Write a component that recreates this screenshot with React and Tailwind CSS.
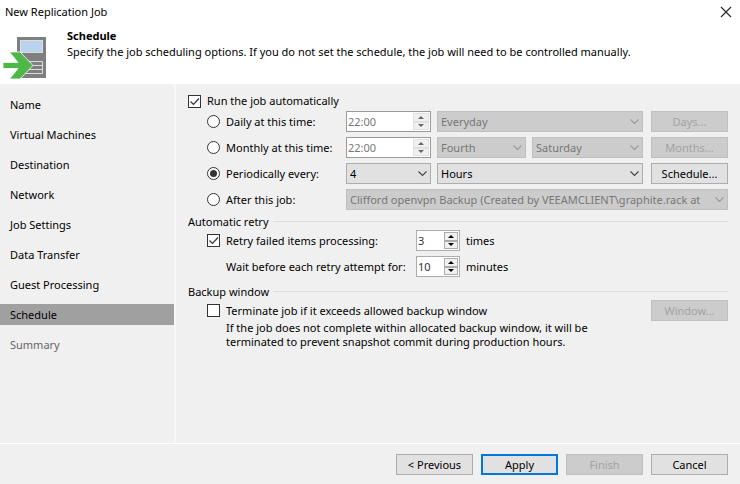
import React, { useState } from 'react';

const steps = [
  'Name',
  'Virtual Machines',
  'Destination',
  'Network',
  'Job Settings',
  'Data Transfer',
  'Guest Processing',
  'Schedule',
  'Summary',
];

function JobIcon() {
  return (
    <svg width="44" height="44" viewBox="0 0 44 44" aria-hidden="true">
      <rect x="14" y="1" width="29" height="41" fill="#7f7f7f" />
      <rect x="17.5" y="4.5" width="22" height="12" fill="#b9d3ee" stroke="#dcdcdc" />
      <path d="M22 25.5h17.5v12H22M22 29.5h17.5M22 33.5h17.5" fill="none" stroke="#dcdcdc" />
      <path d="M0 26.500h15L6.500 16h10.500l13 13.500L17 43H6.500L15 32.500H0z" fill="#4db848" stroke="#fff" strokeWidth="0.8" />
    </svg>
  );
}

function Checkbox({ label, defaultChecked }) {
  return (
    <label className="flex items-center gap-[6px]">
      <span className="relative flex h-[13px] w-[13px] shrink-0">
        <input
          type="checkbox"
          defaultChecked={defaultChecked}
          className="peer h-[13px] w-[13px] appearance-none border border-[#333] bg-white"
        />
        <svg className="pointer-events-none absolute inset-0 hidden peer-checked:block" width="13" height="13" viewBox="0 0 13 13">
          <path d="M2.500 6.500l3 3 5.500-6" fill="none" stroke="#333" strokeWidth="1.2" />
        </svg>
      </span>
      {label}
    </label>
  );
}

function Radio({ label, checked, onChange }) {
  return (
    <label className="flex w-[139px] shrink-0 items-center gap-[6px] whitespace-nowrap">
      <span className="relative flex h-[13px] w-[13px] shrink-0">
        <input
          type="radio"
          name="mode"
          checked={checked}
          onChange={onChange}
          className="peer h-[13px] w-[13px] appearance-none rounded-full border border-[#333] bg-white"
        />
        <span className="pointer-events-none absolute inset-[3px] hidden rounded-full bg-[#333] peer-checked:block" />
      </span>
      {label}
    </label>
  );
}

function Select({ label, options, disabled, className }) {
  return (
    <div className={`relative h-[21px] min-w-0 ${className}`}>
      <select
        aria-label={label}
        disabled={disabled}
        className="block h-full w-full appearance-none border border-[#adadad] bg-[#e1e1e1] pr-4 pl-[3px] disabled:border-[#bfbfbf] disabled:bg-[#ccc] disabled:text-[#777] disabled:opacity-100"
      >
        {options.map((o) => (
          <option key={o}>{o}</option>
        ))}
      </select>
      <svg className="pointer-events-none absolute top-[7px] right-1" width="9" height="7" viewBox="0 0 9 7">
        <path d="M.5 1.500l4 4 4-4" fill="none" stroke={disabled ? '#9a9a9a' : '#444'} strokeWidth="1.1" />
      </svg>
    </div>
  );
}

function Spinner({ label, value, disabled, className }) {
  const color = disabled ? '#666' : '#000';
  return (
    <div className={`flex h-[21px] shrink-0 border bg-white p-px ${disabled ? 'border-[#999]' : 'border-[#abadb3]'} ${className}`}>
      <input
        type="text"
        aria-label={label}
        defaultValue={value}
        disabled={disabled}
        className="min-w-0 flex-1 bg-white text-[#333] disabled:text-[#777]"
      />
      <div className={`flex flex-col ${disabled ? 'w-4' : 'w-[14px]'}`}>
        {['up', 'down'].map((dir) => (
          <button
            key={dir}
            type="button"
            disabled={disabled}
            aria-label={`${label} ${dir}`}
            className="flex flex-1 items-center justify-center border border-[#acacac] bg-[#f0f0f0] disabled:border-[#e0e0e0]"
          >
            <svg width="6" height="3" viewBox="0 0 6 3">
              <path d={dir === 'up' ? 'M0 3L3 0l3 3z' : 'M0 0l3 3 3-3z'} fill={color} />
            </svg>
          </button>
        ))}
      </div>
    </div>
  );
}

function Button({ children, disabled, primary }) {
  return (
    <button
      type="button"
      disabled={disabled}
      className={`h-[21px] w-[77px] shrink-0 bg-[#e1e1e1] disabled:border-[#bfbfbf] disabled:bg-[#ccc] disabled:text-[#a3a3a3] ${
        primary ? 'border-2 border-[#0078d7]' : 'border border-[#adadad]'
      }`}
    >
      {children}
    </button>
  );
}

function SectionTitle({ children }) {
  return (
    <h2 className="flex h-[17px] items-center gap-1">
      {children}
      <span className="h-px flex-1 bg-[#dcdcdc]" />
    </h2>
  );
}

function App() {
  const [mode, setMode] = useState('periodic');

  return (
    <div className="flex min-h-screen flex-col bg-[#f0f0f0] font-['Noto_Sans','Open_Sans',sans-serif] text-[11px] leading-[14px] text-black">
      <header className="h-[84px] bg-white">
        <div className="flex h-6 items-center justify-between pr-2 pl-[5px]">
          <span>New Replication Job</span>
          <button type="button" aria-label="Close">
            <svg width="12" height="12" viewBox="0 0 12 12">
              <path d="M1 1l10 10M11 1L1 11" stroke="#222" strokeWidth="1.1" />
            </svg>
          </button>
        </div>
        <div className="flex gap-5 pl-[3px]">
          <div className="pt-3">
            <JobIcon />
          </div>
          <div className="pt-1">
            <h1 className="leading-4 font-bold">Schedule</h1>
            <p className="leading-4">
              Specify the job scheduling options. If you do not set the schedule, the job will need to be controlled manually.
            </p>
          </div>
        </div>
      </header>

      <div className="flex flex-1">
        <nav className="w-[176px] shrink-0 border-r-2 border-[#f8f8f8] pt-[10px]">
          <ul className="flex flex-col gap-[9px]">
            {steps.map((step) => (
              <li key={step}>
                <a
                  href="#"
                  className={`flex h-[21px] items-center pl-[10px] ${step === 'Schedule' ? 'bg-[#a0a0a0]' : ''} ${
                    step === 'Summary' ? 'text-[#666]' : ''
                  }`}
                >
                  {step}
                </a>
              </li>
            ))}
          </ul>
        </nav>

        <main className="min-w-0 flex-1 pt-[7px] pr-3 pl-3">
          <div className="flex h-5 items-center">
            <Checkbox label="Run the job automatically" defaultChecked />
          </div>

          <div className="flex flex-col gap-[5px] pb-[3px] pl-[19px]">
            <div className="flex">
              <Radio label="Daily at this time:" checked={mode === 'daily'} onChange={() => setMode('daily')} />
              <Spinner label="Daily time" value="22:00" disabled={mode !== 'daily'} className="mr-[6px] w-[85px]" />
              <Select label="Daily days" options={['Everyday']} disabled={mode !== 'daily'} className="mr-2 flex-1" />
              <Button disabled={mode !== 'daily'}>Days...</Button>
            </div>
            <div className="flex">
              <Radio label="Monthly at this time:" checked={mode === 'monthly'} onChange={() => setMode('monthly')} />
              <Spinner label="Monthly time" value="22:00" disabled={mode !== 'monthly'} className="mr-[6px] w-[85px]" />
              <Select label="Week of month" options={['Fourth']} disabled={mode !== 'monthly'} className="mr-[6px] w-[89px]" />
              <Select label="Day of week" options={['Saturday']} disabled={mode !== 'monthly'} className="mr-2 flex-1" />
              <Button disabled={mode !== 'monthly'}>Months...</Button>
            </div>
            <div className="flex">
              <Radio label="Periodically every:" checked={mode === 'periodic'} onChange={() => setMode('periodic')} />
              <Select label="Period" options={['4']} disabled={mode !== 'periodic'} className="mr-[6px] w-[85px]" />
              <Select label="Period unit" options={['Hours']} disabled={mode !== 'periodic'} className="mr-2 flex-1" />
              <Button disabled={mode !== 'periodic'}>Schedule...</Button>
            </div>
            <div className="flex">
              <Radio label="After this job:" checked={mode === 'after'} onChange={() => setMode('after')} />
              <Select
                label="Preceding job"
                options={['Clifford openvpn Backup (Created by VEEAMCLIENT\\graphite.rack at']}
                disabled={mode !== 'after'}
                className="flex-1"
              />
            </div>
          </div>

          <SectionTitle>Automatic retry</SectionTitle>
          <div className="flex flex-col gap-[5px] pb-[6px] pl-[19px]">
            <div className="flex items-center">
              <div className="w-[209px]">
                <Checkbox label="Retry failed items processing:" defaultChecked />
              </div>
              <Spinner label="Retry count" value="3" className="mr-[6px] w-11" />
              times
            </div>
            <div className="flex items-center">
              <div className="w-[209px] pl-[19px] whitespace-nowrap">Wait before each retry attempt for:</div>
              <Spinner label="Retry wait" value="10" className="mr-[6px] w-11" />
              minutes
            </div>
          </div>

          <SectionTitle>Backup window</SectionTitle>
          <div className="pl-[19px]">
            <div className="flex items-center justify-between">
              <Checkbox label="Terminate job if it exceeds allowed backup window" />
              <Button disabled>Window...</Button>
            </div>
            <p className="max-w-[420px] pl-[19px]">
              If the job does not complete within allocated backup window, it will be terminated to prevent snapshot commit
              during production hours.
            </p>
          </div>
        </main>
      </div>

      <footer className="flex justify-end gap-2 border-t border-white pt-[10px] pr-3 pb-[9px]">
        <Button>&lt; Previous</Button>
        <Button primary>Apply</Button>
        <Button disabled>Finish</Button>
        <Button>Cancel</Button>
      </footer>
    </div>
  );
}

export default App;
